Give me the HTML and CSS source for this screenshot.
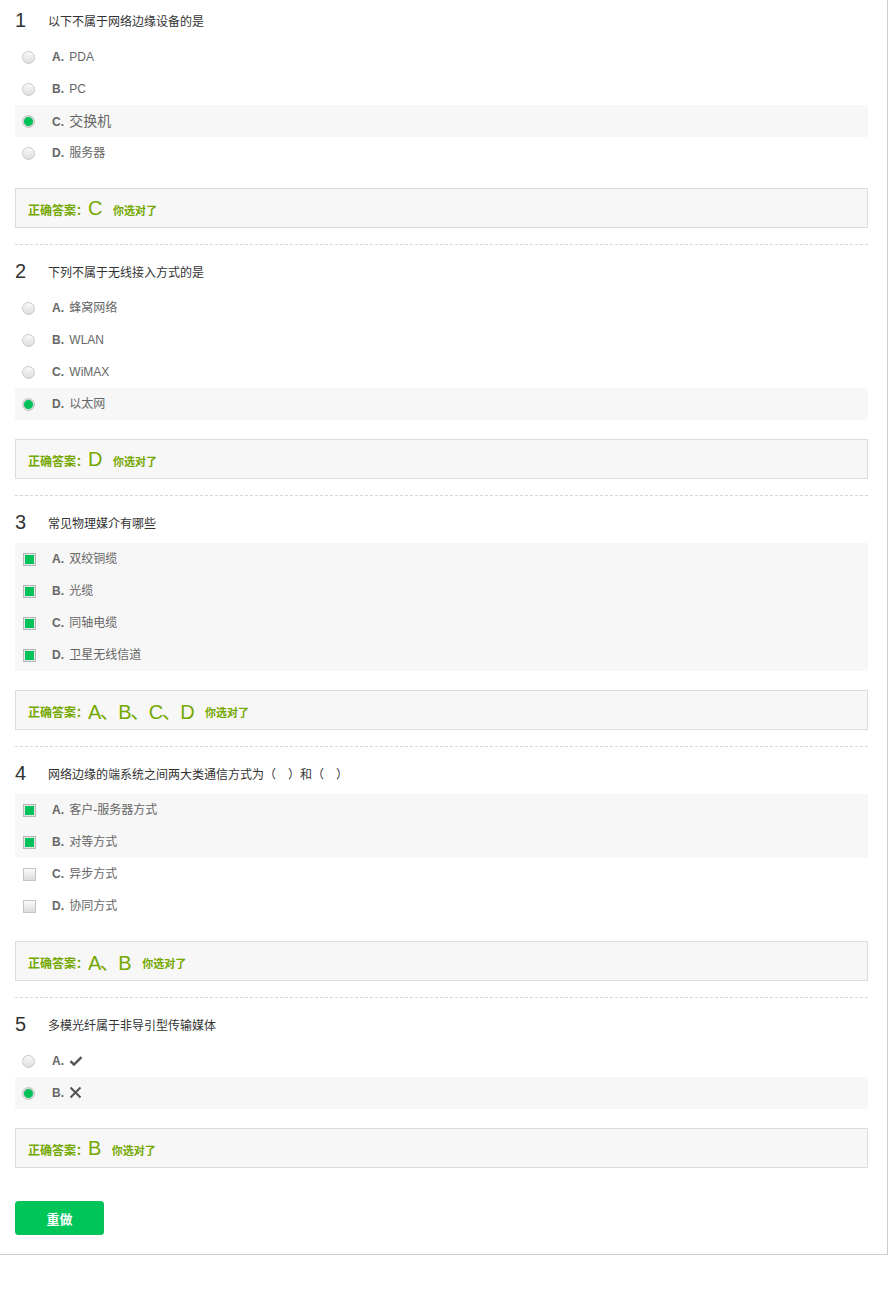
FILE: index.html
```html
<!DOCTYPE html>
<html lang="zh">
<head>
<meta charset="utf-8">
<title>测验</title>
<link rel="stylesheet" href="styles.css">
</head>
<body>
<div class="page">
  <div class="question">
    <div class="q-head"><span class="q-num">1</span><span class="q-text">以下不属于网络边缘设备的是</span></div>
    <div class="options">
      <div class="opt"><span class="radio"></span><span class="otext"><b class="lbl">A.</b> <span class="txt">PDA</span></span></div>
      <div class="opt"><span class="radio"></span><span class="otext"><b class="lbl">B.</b> <span class="txt">PC</span></span></div>
      <div class="opt sel"><span class="radio on"></span><span class="otext"><b class="lbl">C.</b> <span class="txt big">交换机</span></span></div>
      <div class="opt"><span class="radio"></span><span class="otext"><b class="lbl">D.</b> <span class="txt">服务器</span></span></div>
    </div>
    <div class="answer"><span class="a-key">正确答案：</span><span class="a-val">C</span><span class="a-ok">你选对了</span></div>
    <div class="sep"></div>
  </div>

  <div class="question">
    <div class="q-head"><span class="q-num">2</span><span class="q-text">下列不属于无线接入方式的是</span></div>
    <div class="options">
      <div class="opt"><span class="radio"></span><span class="otext"><b class="lbl">A.</b> <span class="txt">蜂窝网络</span></span></div>
      <div class="opt"><span class="radio"></span><span class="otext"><b class="lbl">B.</b> <span class="txt">WLAN</span></span></div>
      <div class="opt"><span class="radio"></span><span class="otext"><b class="lbl">C.</b> <span class="txt">WiMAX</span></span></div>
      <div class="opt sel"><span class="radio on"></span><span class="otext"><b class="lbl">D.</b> <span class="txt">以太网</span></span></div>
    </div>
    <div class="answer"><span class="a-key">正确答案：</span><span class="a-val">D</span><span class="a-ok">你选对了</span></div>
    <div class="sep"></div>
  </div>

  <div class="question">
    <div class="q-head"><span class="q-num">3</span><span class="q-text">常见物理媒介有哪些</span></div>
    <div class="options">
      <div class="opt sel"><span class="check on"></span><span class="otext"><b class="lbl">A.</b> <span class="txt">双绞铜缆</span></span></div>
      <div class="opt sel"><span class="check on"></span><span class="otext"><b class="lbl">B.</b> <span class="txt">光缆</span></span></div>
      <div class="opt sel"><span class="check on"></span><span class="otext"><b class="lbl">C.</b> <span class="txt">同轴电缆</span></span></div>
      <div class="opt sel"><span class="check on"></span><span class="otext"><b class="lbl">D.</b> <span class="txt">卫星无线信道</span></span></div>
    </div>
    <div class="answer"><span class="a-key">正确答案：</span><span class="a-val">A、B、C、D</span><span class="a-ok">你选对了</span></div>
    <div class="sep"></div>
  </div>

  <div class="question">
    <div class="q-head"><span class="q-num">4</span><span class="q-text">网络边缘的端系统之间两大类通信方式为（　）和（　）</span></div>
    <div class="options">
      <div class="opt sel"><span class="check on"></span><span class="otext"><b class="lbl">A.</b> <span class="txt">客户-服务器方式</span></span></div>
      <div class="opt sel"><span class="check on"></span><span class="otext"><b class="lbl">B.</b> <span class="txt">对等方式</span></span></div>
      <div class="opt"><span class="check"></span><span class="otext"><b class="lbl">C.</b> <span class="txt">异步方式</span></span></div>
      <div class="opt"><span class="check"></span><span class="otext"><b class="lbl">D.</b> <span class="txt">协同方式</span></span></div>
    </div>
    <div class="answer"><span class="a-key">正确答案：</span><span class="a-val">A、B</span><span class="a-ok">你选对了</span></div>
    <div class="sep"></div>
  </div>

  <div class="question last">
    <div class="q-head"><span class="q-num">5</span><span class="q-text">多模光纤属于非导引型传输媒体</span></div>
    <div class="options">
      <div class="opt"><span class="radio"></span><span class="otext"><b class="lbl">A.</b> <span class="txt icon"><svg width="14" height="12" viewBox="0 0 14 12"><path d="M1.5 6.2 L5 9.6 L12.5 2.2" fill="none" stroke="#555" stroke-width="2.4"/></svg></span></span></div>
      <div class="opt sel"><span class="radio on"></span><span class="otext"><b class="lbl">B.</b> <span class="txt icon"><svg width="13" height="13" viewBox="0 0 13 13"><path d="M1.5 1.5 L11.5 11.5 M11.5 1.5 L1.5 11.5" fill="none" stroke="#555" stroke-width="2"/></svg></span></span></div>
    </div>
    <div class="answer"><span class="a-key">正确答案：</span><span class="a-val">B</span><span class="a-ok">你选对了</span></div>
  </div>

  <button class="redo" type="button">重做</button>
</div>
<div class="foot-line"></div>
</body>
</html>
```

FILE: styles.css
```css
html, body {
  margin: 0;
  padding: 0;
  background: #fff;
}
body {
  font-family: "Liberation Sans", "Noto Sans CJK SC", sans-serif;
  font-size: 12px;
  color: #333;
}
.page {
  width: 853px;
  padding: 0 19px 19px 15px;
  border-right: 1px solid #ccc;
  border-bottom: 1px solid #ccc;
}
.question {
  padding-bottom: 6px;
}
.question.last {
  padding-bottom: 0;
}
.q-head {
  height: 41px;
  display: flex;
  align-items: center;
}
.q-num {
  width: 33px;
  font-size: 20px;
  color: #333;
  line-height: 1;
  padding-bottom: 1px;
}
.q-text {
  font-size: 12px;
  color: #333;
}
.options {
  display: flex;
  flex-direction: column;
}
.opt {
  height: 32px;
  display: flex;
  align-items: center;
  padding-left: 7px;
  color: #666;
}
.opt.sel {
  background: #f7f7f7;
}
.otext {
  line-height: 20px;
  white-space: nowrap;
}
.radio {
  width: 11px;
  height: 11px;
  border-radius: 50%;
  border: 1px solid #c8c8c8;
  background: linear-gradient(#fafafa, #dedede);
  margin-right: 17px;
  flex: none;
}
.radio.on {
  border-color: #c4c4c4;
  background: radial-gradient(circle, #00c25a 0, #00c25a 4px, #d6d6d6 5px, #e8e8e8 6px);
}
.check {
  width: 11px;
  height: 11px;
  border: 1px solid #c4c4c4;
  background: linear-gradient(#fbfbfb, #dcdcdc);
  margin-left: 1px;
  margin-right: 16px;
  flex: none;
}
.check.on {
  background: #00c25a;
  box-shadow: inset 0 0 0 1px #e6e6e6;
  border-color: #b8b8b8;
}
.lbl {
  font-weight: bold;
  color: #666;
  margin-right: 2px;
}
.txt {
  color: #666;
}
.txt.big {
  font-size: 14px;
}
.txt.icon {
  display: inline-block;
  vertical-align: middle;
  line-height: 0;
  position: relative;
  top: -1px;
}
.answer {
  margin-top: 19px;
  height: 38px;
  border: 1px solid #dcdcdc;
  background: #f7f7f7;
  display: flex;
  align-items: center;
  padding-left: 12px;
  color: #74a800;
}
.a-key {
  font-size: 12px;
  font-weight: bold;
  margin-top: 3px;
}
.a-val {
  font-size: 20px;
  margin-right: 12px;
  letter-spacing: -1.5px;
}
.a-ok {
  font-size: 11px;
  font-weight: bold;
  margin-top: 3px;
}
.sep {
  margin-top: 16px;
  border-top: 1px dashed #d6d6d6;
}
.redo {
  display: block;
  margin-top: 33px;
  width: 89px;
  height: 34px;
  border: 1px solid #0bbf5a;
  border-radius: 3px;
  background: #00c65a;
  color: #fff;
  font-family: "Liberation Sans", "Noto Sans CJK SC", sans-serif;
  font-size: 13px;
  font-weight: bold;
  padding: 0;
}
.foot-line {
  margin-top: 35px;
  width: 130px;
  border-top: 1px solid #f0f0f0;
}
```
